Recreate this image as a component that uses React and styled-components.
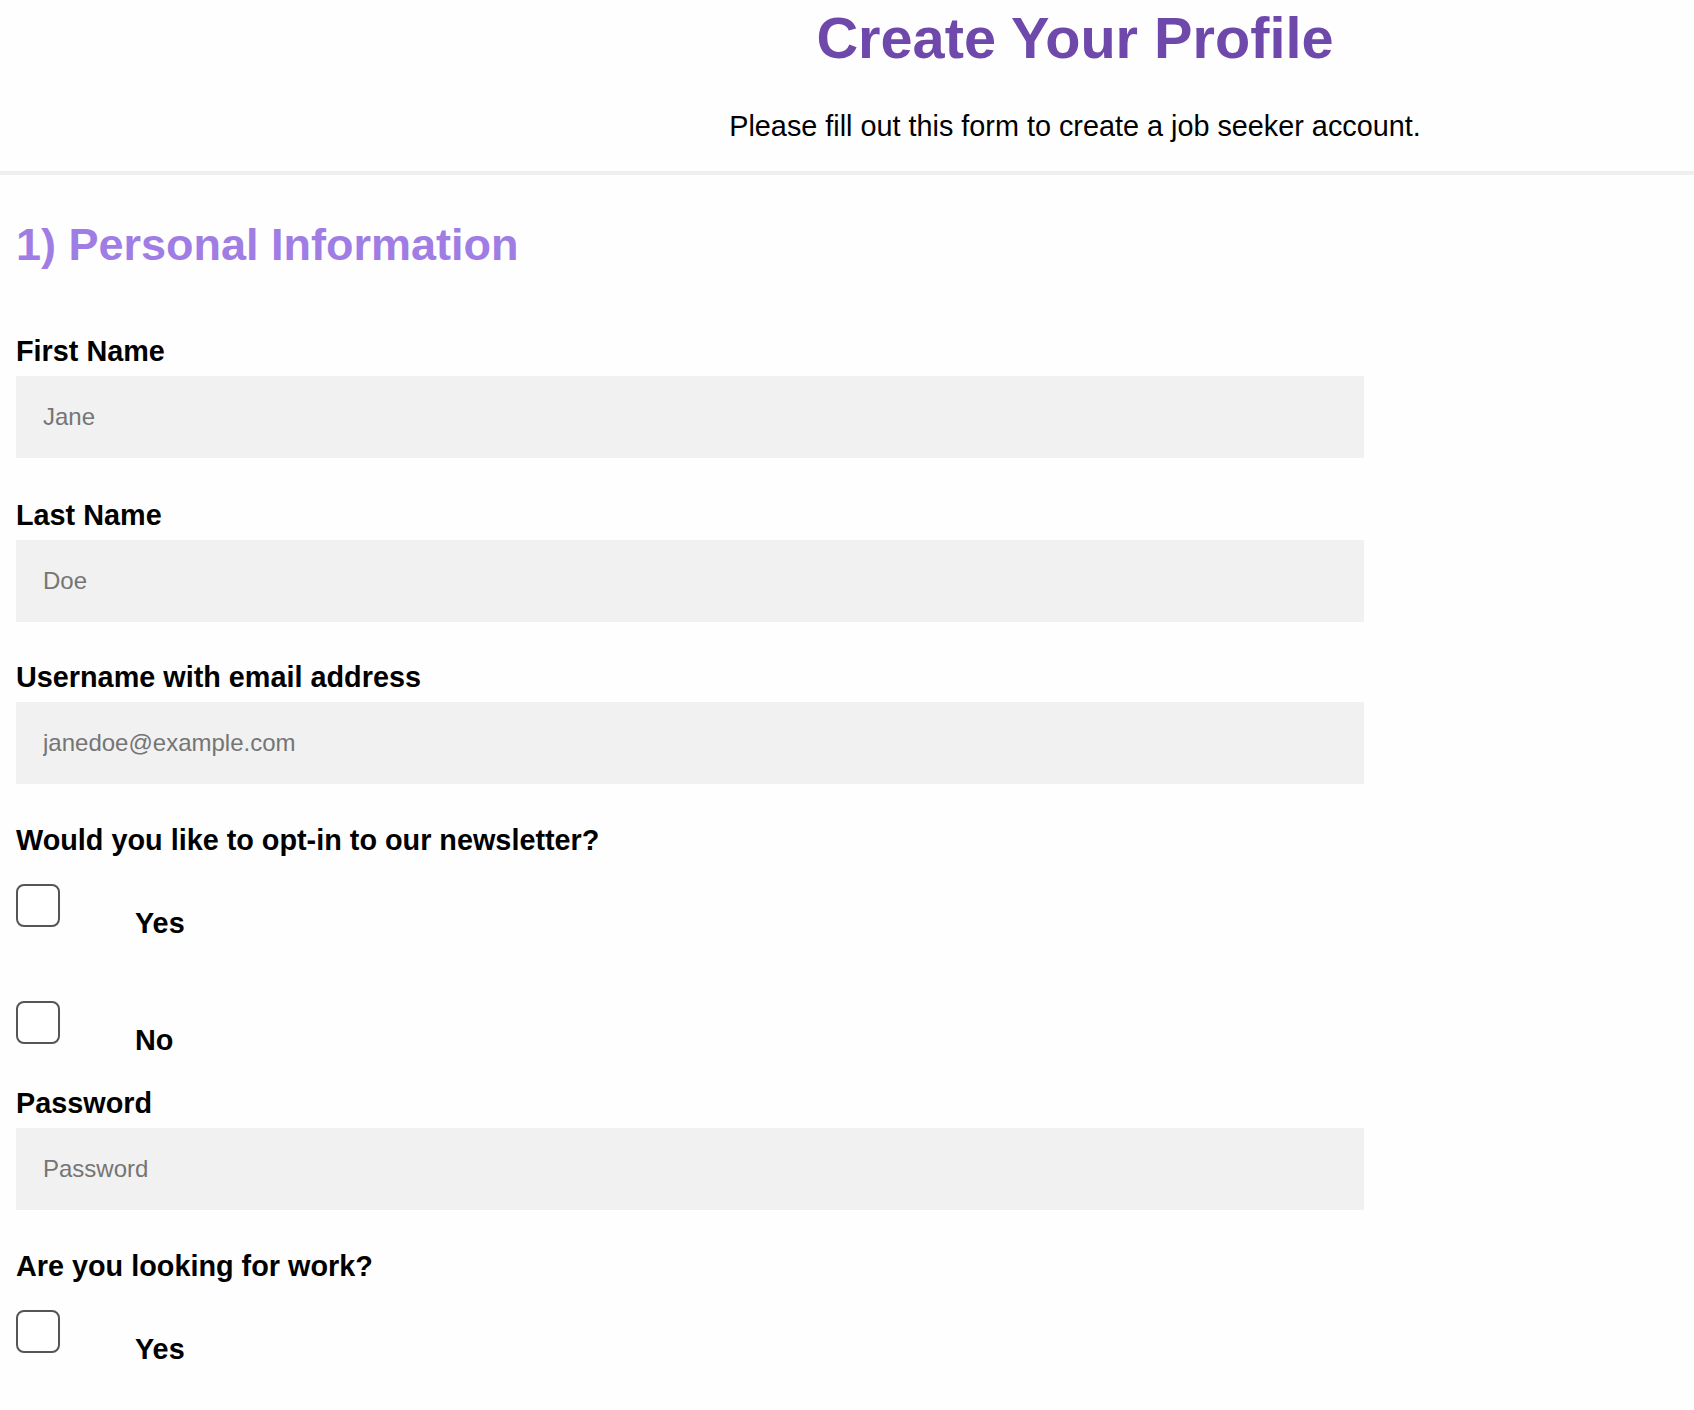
import React from "react";
import styled, { createGlobalStyle } from "styled-components";

const GlobalStyle = createGlobalStyle`
  body {
    margin: 0;
    background: #fefefe;
    font-family: "Liberation Sans", Arial, sans-serif;
    color: #000;
  }
`;

const Header = styled.header`
  padding: 5px 0 28px 456px;
  text-align: center;
  border-bottom: 4px solid #efefef;
`;

const Title = styled.h1`
  margin: 0;
  font-size: 57.7px;
  font-weight: 700;
  color: #6e48aa;
`;

const Subtitle = styled.p`
  margin: 39px 0 0;
  font-size: 28.8px;
`;

const Form = styled.form`
  padding: 44px 16px 40px;
`;

const SectionTitle = styled.h2`
  margin: 0 0 25px;
  font-size: 45px;
  font-weight: 700;
  color: #a07de4;
`;

const Field = styled.div`
  margin-top: ${(p) => p.$gap || 40}px;
`;

const Label = styled.label`
  display: block;
  margin-bottom: 8px;
  font-size: 28.8px;
  font-weight: 700;
`;

const Input = styled.input`
  display: block;
  box-sizing: border-box;
  width: 1348px;
  height: 82px;
  padding: 0 27px;
  border: none;
  background: #f1f1f1;
  font-family: "Liberation Sans", Arial, sans-serif;
  font-size: 24px;
  outline: none;

  &::placeholder {
    color: #757575;
  }
`;

const Question = styled.div`
  display: block;
  font-size: 28.8px;
  font-weight: 700;
`;

const Options = styled.div`
  display: flex;
  flex-direction: column;
  gap: 61px;
  margin-top: 27px;
`;

const OptionRow = styled.label`
  display: flex;
  align-items: flex-start;
`;

const Box = styled.input`
  appearance: none;
  box-sizing: border-box;
  width: 44px;
  height: 43px;
  margin: 0;
  border: 2px solid #555;
  border-radius: 8px;
  background: #fff;
`;

const OptionText = styled.span`
  margin: 23px 0 0 75px;
  font-size: 28.8px;
  font-weight: 700;
`;

function CheckGroup({ question, options, gap }) {
  return (
    <Field $gap={gap}>
      <Question>{question}</Question>
      <Options>
        {options.map((o) => (
          <OptionRow key={o}>
            <Box type="checkbox" />
            <OptionText>{o}</OptionText>
          </OptionRow>
        ))}
      </Options>
    </Field>
  );
}

function TextField({ label, placeholder, type = "text", gap }) {
  return (
    <Field $gap={gap}>
      <Label>{label}</Label>
      <Input type={type} placeholder={placeholder} />
    </Field>
  );
}

export default function App() {
  return (
    <>
      <GlobalStyle />
      <Header>
        <Title>Create Your Profile</Title>
        <Subtitle>Please fill out this form to create a job seeker account.</Subtitle>
      </Header>
      <Form onSubmit={(e) => e.preventDefault()}>
        <SectionTitle>1) Personal Information</SectionTitle>
        <TextField label="First Name" placeholder="Jane" gap={64} />
        <TextField label="Last Name" placeholder="Doe" gap={41} />
        <TextField label="Username with email address" placeholder="janedoe@example.com" gap={39} />
        <CheckGroup question="Would you like to opt-in to our newsletter?" options={["Yes", "No"]} />
        <TextField label="Password" placeholder="Password" type="password" gap={30} />
        <CheckGroup question="Are you looking for work?" options={["Yes", "No"]} gap={40} />
      </Form>
    </>
  );
}
